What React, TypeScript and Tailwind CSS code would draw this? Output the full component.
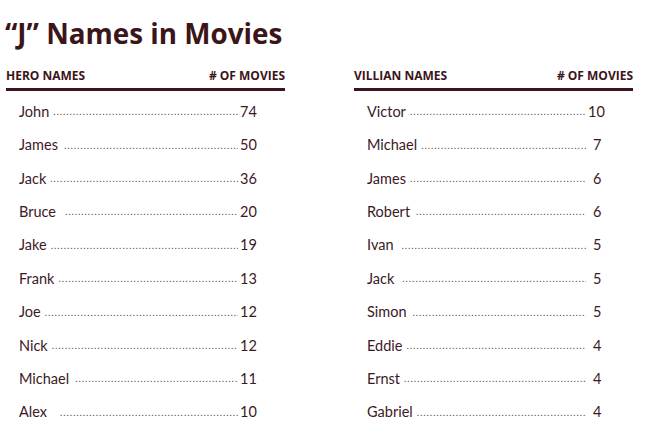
const heroes: [string, string, number][] = [
  ["John", "74", 0],
  ["James", "50", 2],
  ["Jack", "36", 0],
  ["Bruce", "20", 5],
  ["Jake", "19", 0],
  ["Frank", "13", 0],
  ["Joe", "12", 0],
  ["Nick", "12", 0],
  ["Michael", "11", 2],
  ["Alex", "10", 9],
]

const villains: [string, string, number][] = [
  ["Victor", "10", 0],
  ["Michael", "7", 0],
  ["James", "6", 0],
  ["Robert", "6", 2],
  ["Ivan", "5", 4],
  ["Jack", "5", 4],
  ["Simon", "5", 2],
  ["Eddie", "4", 0],
  ["Ernst", "4", 0],
  ["Gabriel", "4", 0],
]

const DOTS = ".".repeat(120)

function Row({ name, count, gap }: { name: string; count: string; gap: number }) {
  return (
    <div className="grid h-[33.4px] grid-cols-[auto_minmax(0,1fr)_18px] items-center pl-[13px] pr-[29px] font-['Lato',sans-serif] text-[14.5px] text-[#3b1a1f]">
      <span className="whitespace-nowrap" style={{ paddingRight: 4 + gap }}>
        {name}
      </span>
      <span className="overflow-hidden whitespace-nowrap text-[10px] tracking-[0.9px] text-[#5e4a4d]">{DOTS}</span>
      <span className={count.length === 1 ? "pl-[7px] text-left" : "pl-[2px] text-left"}>{count}</span>
    </div>
  )
}

function Column({ title, rows }: { title: string; rows: [string, string, number][] }) {
  return (
    <div className="w-[279px]">
      <div className="flex justify-between border-b-[3px] border-[#3b1519] pb-[5px] text-[12px] font-bold leading-[14px] text-[#3b1519]">
        <span>{title}</span>
        <span># OF MOVIES</span>
      </div>
      <div className="pt-[4px]">
        {rows.map(([n, c, g]) => (
          <Row key={n} name={n} count={c} gap={g} />
        ))}
      </div>
    </div>
  )
}

export default function App() {
  return (
    <div className="h-[433px] w-[650px] bg-white pl-[6px] pt-[16px] font-['Open_Sans',sans-serif]">
      <h1 className="-ml-[1px] text-[27.8px] font-bold leading-[34px] text-[#3b1519]">“J” Names in Movies</h1>
      <div className="mt-[19px] flex gap-[69px]">
        <Column title="HERO NAMES" rows={heroes} />
        <Column title="VILLIAN NAMES" rows={villains} />
      </div>
    </div>
  )
}
